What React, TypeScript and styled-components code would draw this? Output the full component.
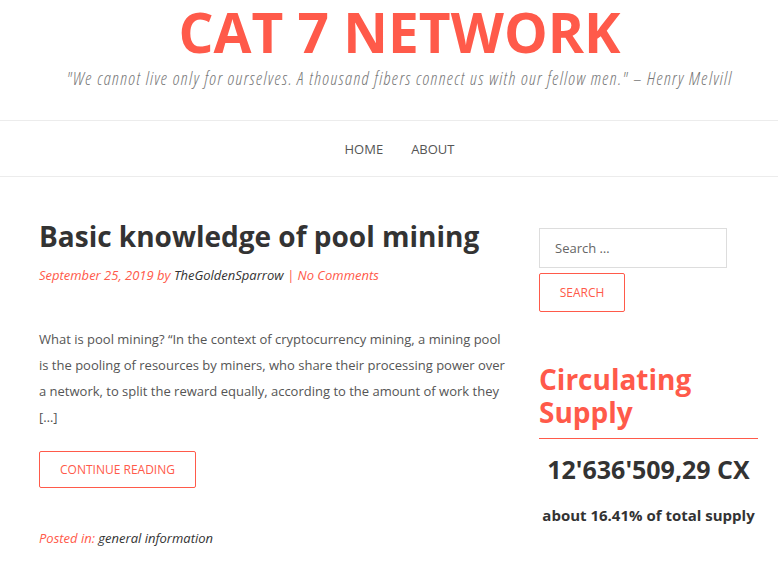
import React from "react";
import styled, { createGlobalStyle } from "styled-components";

const RED = "#ff5a4a";

const Global = createGlobalStyle`
  html, body { margin: 0; padding: 0; background: #fff; }
  body { font-family: "Open Sans", "Liberation Sans", sans-serif; color: #555; }
  * { box-sizing: border-box; }
`;

const Header = styled.header`
  display: flex;
  flex-direction: column;
  align-items: center;
  height: 121px;
  padding-left: 21px;
  border-bottom: 1px solid #ececec;
`;

const SiteTitle = styled.h1`
  margin: 0;
  font-family: "Open Sans", sans-serif;
  font-weight: 700;
  font-size: 55px;
  line-height: 64px;
  color: ${RED};
`;

const Tagline = styled.p`
  margin: 2px 0 0;
  font-style: italic;
  font-weight: 300;
  font-size: 18px;
  line-height: 24px;
  font-stretch: 75%;
  letter-spacing: 1.3px;
  color: #777;
`;

const Nav = styled.nav`
  display: flex;
  justify-content: center;
  gap: 28px;
  height: 56px;
  padding-left: 21px;
  padding-top: 1px;
  align-items: center;
  border-bottom: 1px solid #ececec;
`;

const NavLink = styled.a`
  font-size: 13px;
  color: #555;
  text-transform: uppercase;
  text-decoration: none;
`;

const Main = styled.div`
  display: flex;
  padding: 40px 20px 0 39px;
  gap: 34px;
`;

const Article = styled.article`
  flex: 1;
`;

const PostTitle = styled.h2`
  margin: 0;
  font-size: 28px;
  line-height: 38px;
  font-weight: 700;
  color: #333;
`;

const Meta = styled.div`
  margin-top: 11px;
  font-size: 13px;
  font-style: italic;
  color: ${RED};
`;

const Dark = styled.span`
  color: #333;
`;

const Excerpt = styled.p`
  margin: 42px 0 0;
  font-size: 13px;
  line-height: 26px;
  color: #555;
`;

const OutlineButton = styled.button<{ $w?: number; $h?: number }>`
  display: inline-flex;
  align-items: center;
  justify-content: center;
  width: ${(p) => p.$w}px;
  height: ${(p) => p.$h}px;
  border: 1px solid ${RED};
  border-radius: 2px;
  background: #fff;
  color: ${RED};
  font-family: "Open Sans", sans-serif;
  font-size: 12px;
  text-transform: uppercase;
  padding: 0;
`;

const ButtonRow = styled.div`
  margin-top: 21px;
`;

const PostedIn = styled.div`
  margin-top: 41px;
  font-size: 13px;
  font-style: italic;
  color: ${RED};
`;

const Sidebar = styled.aside`
  width: 219px;
  flex-shrink: 0;
  padding-top: 11px;
`;

const SearchInput = styled.input`
  display: block;
  width: 188px;
  height: 40px;
  border: 1px solid #ddd;
  padding: 0 15px;
  font-family: "Open Sans", sans-serif;
  font-size: 13px;
  color: #555;
  &::placeholder { color: #666; }
`;

const SearchRow = styled.div`
  margin-top: 5px;
`;

const WidgetTitle = styled.h3`
  margin: 51px 0 0;
  font-size: 28px;
  line-height: 33px;
  font-weight: 700;
  color: ${RED};
  padding-bottom: 9px;
  border-bottom: 1px solid ${RED};
`;

const Supply = styled.div`
  margin-top: 13px;
  text-align: center;
  font-size: 25px;
  font-weight: 700;
  color: #333;
  line-height: 34px;
`;

const SupplyNote = styled.div`
  margin-top: 19px;
  text-align: center;
  font-size: 15px;
  font-weight: 700;
  color: #333;
`;

export default function App() {
  return (
    <>
      <Global />
      <Header>
        <SiteTitle>CAT 7 NETWORK</SiteTitle>
        <Tagline>
          "We cannot live only for ourselves. A thousand fibers connect us with our fellow men." – Henry Melvill
        </Tagline>
      </Header>
      <Nav>
        <NavLink href="#">Home</NavLink>
        <NavLink href="#">About</NavLink>
      </Nav>
      <Main>
        <Article>
          <PostTitle>Basic knowledge of pool mining</PostTitle>
          <Meta>
            September 25, 2019 by <Dark>TheGoldenSparrow</Dark> | No Comments
          </Meta>
          <Excerpt>
            What is pool mining? “In the context of cryptocurrency mining, a mining pool is the pooling of
            resources by miners, who share their processing power over a network, to split the reward equally,
            according to the amount of work they […]
          </Excerpt>
          <ButtonRow>
            <OutlineButton $w={157} $h={37}>Continue Reading</OutlineButton>
          </ButtonRow>
          <PostedIn>
            Posted in: <Dark>general information</Dark>
          </PostedIn>
        </Article>
        <Sidebar>
          <SearchInput placeholder="Search …" />
          <SearchRow>
            <OutlineButton $w={86} $h={39}>Search</OutlineButton>
          </SearchRow>
          <WidgetTitle>Circulating Supply</WidgetTitle>
          <Supply>12'636'509,29 CX</Supply>
          <SupplyNote>about 16.41% of total supply</SupplyNote>
        </Sidebar>
      </Main>
    </>
  );
}
